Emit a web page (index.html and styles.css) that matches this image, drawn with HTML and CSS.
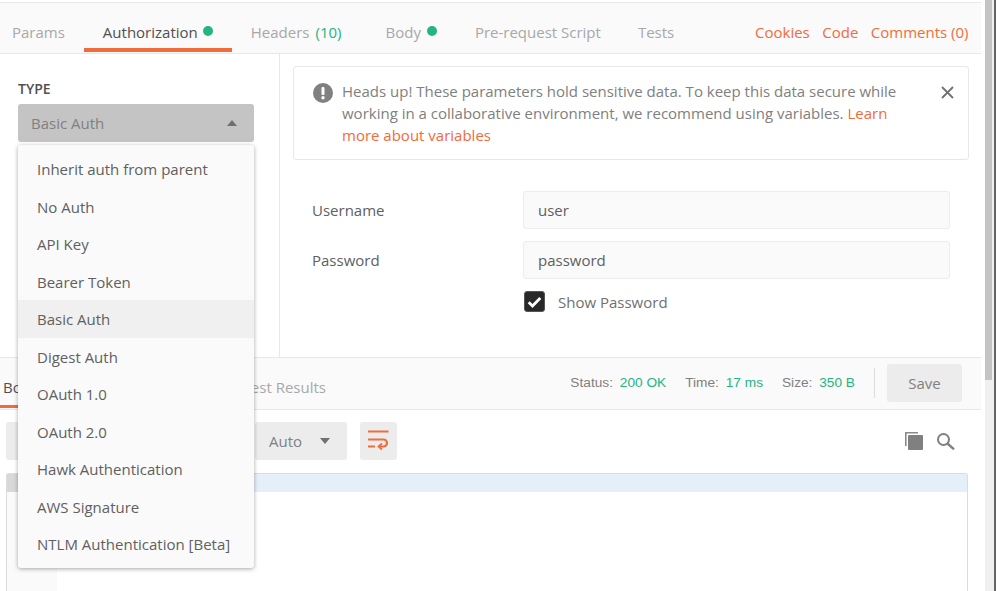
FILE: index.html
```html
<!DOCTYPE html>
<html lang="en">
<head>
<meta charset="utf-8">
<title>Authorization</title>
<link rel="stylesheet" href="styles.css">
</head>
<body>
<div class="app">
  <main class="main">
    <nav class="tabs">
      <a class="tab">Params</a>
      <a class="tab tab-active">Authorization<i class="dot dot-auth"></i></a>
      <a class="tab tab-headers">Headers <span class="green">(10)</span></a>
      <a class="tab">Body<i class="dot"></i></a>
      <a class="tab tab-pre">Pre-request Script</a>
      <a class="tab">Tests</a>
      <div class="links">
        <a class="link">Cookies</a>
        <a class="link">Code</a>
        <a class="link">Comments (0)</a>
      </div>
    </nav>
    <section class="auth">
      <div class="auth-left">
        <div class="type-label">TYPE</div>
        <div class="select">
          <span>Basic Auth</span>
          <svg class="caret" width="10" height="6" viewBox="0 0 10 6"><path d="M0 6 5 0l5 6z"/></svg>
        </div>
      </div>
      <div class="auth-right">
        <div class="alert">
          <svg class="alert-icon" width="20" height="20" viewBox="0 0 20 20"><circle cx="10" cy="10" r="10" fill="#808080"/><rect x="8.5" y="4" width="3" height="8" rx="1" fill="#fff"/><circle cx="10" cy="14.8" r="1.7" fill="#fff"/></svg>
          <p class="alert-text">Heads up! These parameters hold sensitive data. To keep this data secure while working in a collaborative environment, we recommend using variables. <a class="link-inline">Learn more about variables</a></p>
          <svg class="alert-close" width="13" height="13" viewBox="0 0 13 13"><path d="M1 1l11 11M12 1 1 12" stroke="#707070" stroke-width="1.8" fill="none"/></svg>
        </div>
        <div class="form">
          <div class="row"><label class="row-label">Username</label><div class="input">user</div></div>
          <div class="row"><label class="row-label">Password</label><div class="input">password</div></div>
          <div class="check-row">
            <span class="checkbox"><svg width="15" height="12" viewBox="0 0 15 12"><path d="M1.7 6.2 5.5 10 13.3 2" stroke="#fff" stroke-width="2.8" fill="none"/></svg></span>
            <span class="check-label">Show Password</span>
          </div>
        </div>
      </div>
    </section>
    <section class="resp-bar">
      <div class="resp-tabs">
        <a class="rtab rtab-active">Body</a>
        <a class="rtab">Test Results</a>
      </div>
      <div class="stats">
        <span class="stat">Status: <b>200 OK</b></span>
        <span class="stat">Time: <b>17 ms</b></span>
        <span class="stat">Size: <b>350 B</b></span>
      </div>
      <div class="divider"></div>
      <div class="save">Save</div>
    </section>
    <section class="toolbar">
      <div class="btn btn-group"></div>
      <div class="btn btn-auto"><span>Auto</span><svg width="10" height="6" viewBox="0 0 10 6"><path d="M0 0h10L5 6z" fill="#707070"/></svg></div>
      <div class="btn btn-wrap">
        <svg width="21" height="22" viewBox="0 0 21 22" fill="none" stroke="#f26b3a" stroke-width="2.2"><path d="M0 1.500h20.500M0 9.500h15.500a3.500 3.500 0 0 1 0 7H11M0 16.500h7"/><path d="M14 13.500l-3.500 3 3.500 3" stroke-width="1.800"/></svg>
      </div>
      <div class="tools">
        <svg width="18" height="18" viewBox="0 0 18 18"><path d="M0 14V0h13v1.600H1.600V14z" fill="#8a8a8a"/><rect x="3" y="3" width="15" height="15" rx="1" fill="#808080"/></svg>
        <svg width="18" height="18" viewBox="0 0 18 18" fill="none" stroke="#808080" stroke-width="2"><circle cx="6.500" cy="7.500" r="5.500"/><path d="M10.500 11.500l6.500 5.800" stroke-width="2.400"/></svg>
      </div>
    </section>
    <section class="editor">
      <div class="gutter"><div class="gutter-line"></div></div>
      <div class="code"><div class="code-line"></div></div>
    </section>
  </main>
  <div class="scroll"><div class="thumb"></div></div>
</div>
<ul class="menu">
  <li class="menu-item">Inherit auth from parent</li>
  <li class="menu-item">No Auth</li>
  <li class="menu-item">API Key</li>
  <li class="menu-item">Bearer Token</li>
  <li class="menu-item menu-item-current">Basic Auth</li>
  <li class="menu-item">Digest Auth</li>
  <li class="menu-item">OAuth 1.0</li>
  <li class="menu-item">OAuth 2.0</li>
  <li class="menu-item">Hawk Authentication</li>
  <li class="menu-item">AWS Signature</li>
  <li class="menu-item">NTLM Authentication [Beta]</li>
</ul>
</body>
</html>
```

FILE: styles.css
```css
* { box-sizing: border-box; }
html, body { margin: 0; height: 591px; overflow: hidden; background: #fff; }
body { font-family: "Open Sans", sans-serif; font-size: 15px; color: #606060; position: relative; }
.app { display: flex; height: 591px; }
.main { width: 981px; display: flex; flex-direction: column; height: 591px; }

.tabs { margin-top: 2px; height: 52px; border-top: 1px solid #e8e8e8; border-bottom: 1px solid #e8e8e8; background: #fafafa; display: flex; align-items: stretch; padding: 0 12.500px 0 12px; color: #a8a8a8; }
.tab { display: flex; align-items: center; padding: 13px 19px 0; height: 49px; border-bottom: 4px solid transparent; white-space: nowrap; }
.tab:first-child { padding-left: 0; }
.tab-active { color: #505050; border-bottom-color: #f26b3a; }
.tab-headers { padding-right: 25px; }
.tab-pre { padding-right: 18px; }
.tab .green { margin-left: 6px; }
.green { color: #26b47f; }
.dot { width: 10px; height: 10px; border-radius: 50%; background: #26b47f; margin-left: 6px; margin-top: -2px; }
.dot-auth { margin-left: 5px; }
.links { margin-left: auto; display: flex; gap: 12.500px; align-items: center; height: 49px; padding-top: 8px; }
.link { color: #f26b3a; }
.link-inline { color: #f26b3a; }

.auth { display: flex; height: 303px; }
.auth-left { width: 280px; border-right: 1px solid #e8e8e8; padding: 25px 0 0 18px; }
.type-label { font-size: 14px; line-height: 20px; font-weight: 600; color: #505050; margin-bottom: 5px; }
.select { width: 236px; height: 38px; background: #c4c4c4; border-radius: 3px; color: #808080; display: flex; align-items: center; justify-content: space-between; padding: 0 17px 0 13px; }
.caret { fill: #707070; }
.auth-right { flex: 1; padding: 12px 12px 0 13px; }
.alert { height: 94px; border: 1px solid #e8e8e8; border-radius: 3px; display: flex; align-items: flex-start; padding: 16px 14px 0 19px; color: #808080; }
.alert-icon { flex: none; margin-right: 9px; }
.alert-text { margin: -3px 0 0; flex: 1; line-height: 22px; width: 570px; max-width: 570px; }
.alert-close { flex: none; margin: 3px 0 0 auto; }
.form { padding: 31px 19px 0 19px; }
.row { display: flex; align-items: center; margin-bottom: 12px; height: 38px; }
.row-label { width: 211px; color: #606060; }
.input { flex: 1; height: 38px; background: #fafafa; border: 1px solid #ececec; border-radius: 3px; padding: 0 14px; line-height: 36px; color: #606060; }
.check-row { display: flex; align-items: center; margin-left: 212px; margin-top: 1px; }
.checkbox { width: 21px; height: 21px; background: #282828; border-radius: 3px; border: 1px solid #555; display: flex; align-items: center; justify-content: center; margin-right: 13px; }
.check-label { color: #707070; }

.resp-bar { height: 53px; background: #fafafa; border-top: 1px solid #e8e8e8; border-bottom: 1px solid #e8e8e8; display: flex; align-items: center; padding-right: 19px; }
.resp-tabs { width: 326px; display: flex; justify-content: space-between; align-self: stretch; color: #a8a8a8; padding-left: 3px; }
.rtab { line-height: 59px; height: 51px; }
.rtab-active { color: #505050; position: relative; }
.rtab-active::after { content: ""; position: absolute; left: -3px; right: 0; bottom: 1px; height: 3px; background: #f26b3a; }
.stats { margin-left: auto; display: flex; gap: 19px; font-family: "Liberation Sans", Arial, sans-serif; font-size: 13.700px; color: #808080; margin-right: 19px; margin-top: -3px; }
.stat b { font-weight: 400; color: #26b47f; margin-left: 3px; }
.divider { width: 1px; height: 30px; background: #dcdcdc; margin-right: 12px; margin-top: -2px; }
.save { width: 75px; height: 38px; background: #ececec; border-radius: 3px; color: #808080; text-align: center; line-height: 38px; margin-top: -1px; }

.toolbar { height: 63px; display: flex; align-items: flex-start; padding: 12px 26px 0 6px; }
.btn { height: 38px; background: #ececec; border-radius: 3px; display: flex; align-items: center; color: #808080; }
.btn-group { width: 239px; padding-left: 12px; margin-right: 10px; }
.btn-auto { width: 92px; padding: 0 17px 0 14px; justify-content: space-between; margin-right: 13px; }
.btn-wrap { width: 37px; justify-content: center; }
.tools { margin-left: auto; display: flex; gap: 14px; padding-top: 10px; margin-right: 0; }

.editor { flex: 1; margin: 0 13px 0 6px; border: 1px solid #dcdcdc; border-bottom: 0; border-radius: 3px 3px 0 0; display: flex; min-height: 0; }
.gutter { width: 50px; background: #fafafa; }
.gutter-line { height: 18px; background: #d8d8d8; }
.code { flex: 1; }
.code-line { height: 18px; background: #e5effa; }

.scroll { width: 16px; height: 591px; padding-left: 4px; position: relative; background: #fff; }
.thumb { width: 9px; height: 591px; background: linear-gradient(to bottom, #c4c4c4 380px, #f0f0f0 380px); border-right: 2px solid #f0f0f0; box-shadow: 2px 0 0 #666; }

.menu { position: absolute; left: 18px; top: 145px; width: 236px; height: 423px; margin: 0; padding: 5px 0 0; list-style: none; background: #fafafa; border-radius: 3px; box-shadow: 0 1px 4px rgba(0,0,0,.35); }
.menu-item { height: 37.500px; line-height: 38px; padding-left: 19px; color: #606060; white-space: nowrap; }
.menu-item-current { background: #f0f0f0; }
```
